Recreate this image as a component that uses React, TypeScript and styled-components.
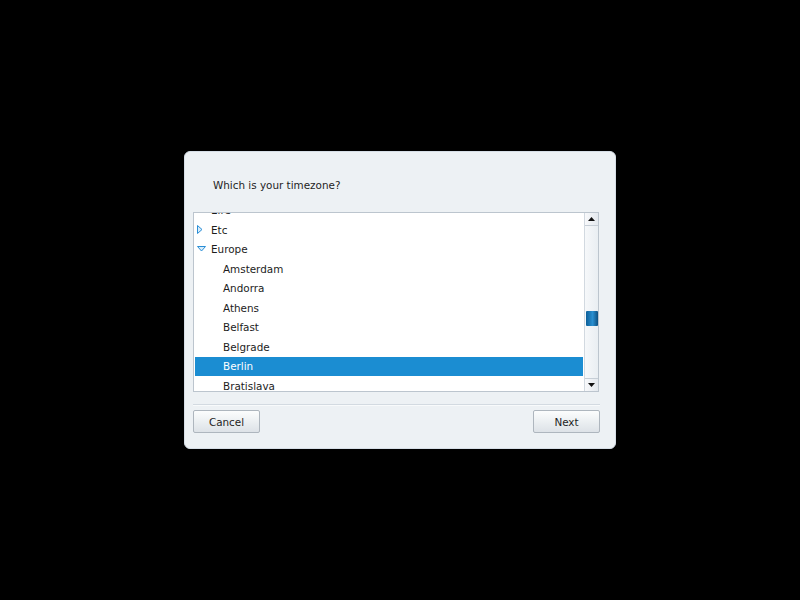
import React from 'react';
import styled, { createGlobalStyle } from 'styled-components';

const GlobalStyle = createGlobalStyle`
	html, body {
		margin: 0;
		padding: 0;
		background: #000;
	}
	body {
		font-family: 'DejaVu Sans', 'Liberation Sans', sans-serif;
	}
`;

const Screen = styled.div`
	width: 800px;
	height: 600px;
	display: flex;
	align-items: center;
	justify-content: center;
	background: #000;
`;

const Dialog = styled.div`
	box-sizing: border-box;
	width: 432px;
	height: 298px;
	border-radius: 6px;
	border: 1px solid #d6dee6;
	background: #edf1f4;
	padding: 0 15px 0 8px;
	display: flex;
	flex-direction: column;
`;

const Heading = styled.div`
	box-sizing: border-box;
	height: 60px;
	display: flex;
	align-items: center;
	padding: 5px 0 0 20px;
	font-size: 10.4px;
	color: #1e1e1e;
`;

const ListBox = styled.div`
	box-sizing: border-box;
	height: 180px;
	width: 406px;
	border: 1px solid #bcc5ce;
	background: #fff;
	display: flex;
`;

const Rows = styled.div`
	flex: 1;
	overflow: hidden;
	padding: 0 1px;
`;

const RowsInner = styled.div`
	margin-top: -12.5px;
`;

const Row = styled.div<{ $indent: number; $selected?: boolean }>`
	height: 19.5px;
	display: flex;
	align-items: center;
	padding-left: ${({ $indent }) => $indent}px;
	font-size: 10.4px;
	color: ${({ $selected }) => ($selected ? '#fff' : '#1c1c1c')};
	background: ${({ $selected }) => ($selected ? '#1b8dd2' : 'transparent')};
`;

const Expander = styled.span`
	width: 15px;
	display: inline-flex;
	align-items: center;
	justify-content: flex-start;
	padding-left: 1px;
	box-sizing: border-box;
`;

const ScrollBar = styled.div`
	width: 13px;
	border-left: 1px solid #d2d9e0;
	background: linear-gradient(to right, #f6f8fa, #e9eef2);
	display: flex;
	flex-direction: column;
`;

const ScrollButton = styled.div<{ $down?: boolean }>`
	height: 12px;
	display: flex;
	align-items: center;
	justify-content: center;
	background: linear-gradient(to right, #f8f9fb, #e4e9ee);
	border-${({ $down }) => ($down ? 'top' : 'bottom')}: 1px solid #c6ced6;
`;

const Track = styled.div`
	flex: 1;
	position: relative;
`;

const Thumb = styled.div`
	position: absolute;
	left: 1px;
	right: 0;
	top: 85px;
	height: 15px;
	background: linear-gradient(to right, #0c5f99, #2a8fd0 55%, #0d4f80);
	border-radius: 1px;
`;

const Separator = styled.div`
	margin-top: 12px;
	height: 1px;
	background: #d3dae1;
	border-bottom: 1px solid #f8fafb;
`;

const ButtonRow = styled.div`
	margin-top: 4px;
	display: flex;
	justify-content: space-between;
`;

const Button = styled.button`
	box-sizing: border-box;
	width: 67px;
	height: 23px;
	border: 1px solid #aeb6be;
	border-radius: 2px;
	background: linear-gradient(to bottom, #fcfdfd, #e9edf0 60%, #dde2e7);
	font-family: 'DejaVu Sans', 'Liberation Sans', sans-serif;
	font-size: 10.4px;
	color: #1e1e1e;
	padding: 0;
`;

const RightArrow = () => (
	<svg width="6" height="9" viewBox="0 0 6 9">
		<path d="M0.5 0.5 L5 4.5 L0.5 8.5 Z" fill="#d8ecfa" stroke="#2a8ed6" strokeWidth="1" />
	</svg>
);

const DownArrow = () => (
	<svg width="9" height="6" viewBox="0 0 9 6">
		<path d="M0.5 0.5 L8.5 0.5 L4.5 5 Z" fill="#d8ecfa" stroke="#2a8ed6" strokeWidth="1" />
	</svg>
);

const SmallArrow = ({ down }: { down?: boolean }) => (
	<svg width="7" height="4" viewBox="0 0 7 4">
		<path d={down ? 'M0 0 L7 0 L3.5 4 Z' : 'M0 4 L7 4 L3.5 0 Z'} fill="#111" />
	</svg>
);

const cities = ['Amsterdam', 'Andorra', 'Athens', 'Belfast', 'Belgrade', 'Berlin', 'Bratislava'];

const App = () => {
	return (
		<>
			<GlobalStyle />
			<Screen>
				<Dialog>
					<Heading>Which is your timezone?</Heading>
					<ListBox>
						<Rows>
							<RowsInner>
								<Row $indent={1}>
									<Expander />
									Eire
								</Row>
								<Row $indent={1}>
									<Expander>
										<RightArrow />
									</Expander>
									Etc
								</Row>
								<Row $indent={1}>
									<Expander>
										<DownArrow />
									</Expander>
									Europe
								</Row>
								{cities.map((city) => (
									<Row key={city} $indent={28} $selected={city === 'Berlin'}>
										{city}
									</Row>
								))}
							</RowsInner>
						</Rows>
						<ScrollBar>
							<ScrollButton>
								<SmallArrow />
							</ScrollButton>
							<Track>
								<Thumb />
							</Track>
							<ScrollButton $down>
								<SmallArrow down />
							</ScrollButton>
						</ScrollBar>
					</ListBox>
					<Separator />
					<ButtonRow>
						<Button>Cancel</Button>
						<Button>Next</Button>
					</ButtonRow>
				</Dialog>
			</Screen>
		</>
	);
};

export default App;
